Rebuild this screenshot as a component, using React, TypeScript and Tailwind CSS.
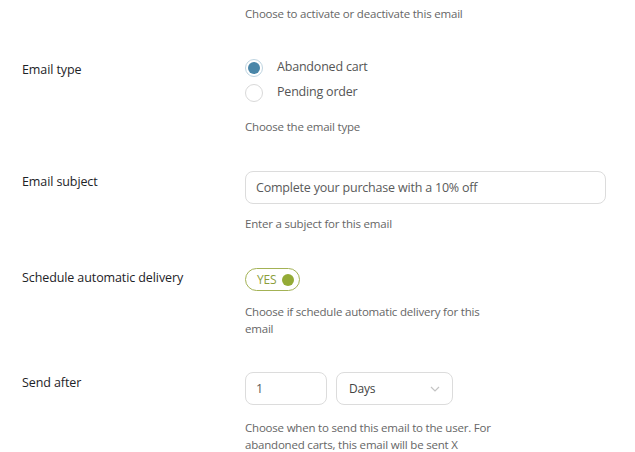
import { useState } from "react";

const font = { fontFamily: '"Open Sans", "Noto Sans", sans-serif' };

function Label({ children, className = "" }: { children: React.ReactNode; className?: string }) {
  return (
    <div
      className={`w-[245px] shrink-0 pl-[22px] text-[12.5px] leading-[18px] font-medium tracking-[-0.1px] text-[#1d2327] ${className}`}
    >
      {children}
    </div>
  );
}

function Desc({ children, className = "" }: { children: React.ReactNode; className?: string }) {
  return <p className={`text-[11.5px] tracking-[-0.2px] text-[#666] ${className}`}>{children}</p>;
}

function Radio({ checked, label, onClick }: { checked: boolean; label: string; onClick: () => void }) {
  return (
    <button type="button" onClick={onClick} className="flex h-[25px] items-center gap-[14px] text-left">
      <span
        className={`flex h-[18px] w-[18px] items-center justify-center rounded-full border bg-white ${
          checked ? "border-[#bfd5e1]" : "border-[#d9d9d9]"
        }`}
      >
        {checked && <span className="h-[12px] w-[12px] rounded-full bg-[#4a86a8]" />}
      </span>
      <span className="text-[12.5px] tracking-[-0.2px] text-[#555]">{label}</span>
    </button>
  );
}

export default function App() {
  const [type, setType] = useState("abandoned");
  const [on, setOn] = useState(true);

  return (
    <div className="min-h-screen w-full bg-white pt-[5px]" style={font}>
      {/* Active */}
      <div className="flex">
        <Label> </Label>
        <Desc className="leading-[18px]">Choose to activate or deactivate this email</Desc>
      </div>

      {/* Email type */}
      <div className="mt-[32px] flex">
        <Label className="pt-[6px]">Email type</Label>
        <div className="flex flex-col">
          <Radio checked={type === "abandoned"} label="Abandoned cart" onClick={() => setType("abandoned")} />
          <Radio checked={type === "pending"} label="Pending order" onClick={() => setType("pending")} />
          <Desc className="mt-[13px] leading-[18px]">Choose the email type</Desc>
        </div>
      </div>

      {/* Email subject */}
      <div className="mt-[35px] flex">
        <Label className="pt-[2px]">Email subject</Label>
        <div className="flex flex-col">
          <input
            defaultValue="Complete your purchase with a 10% off"
            className="h-[33px] w-[361px] rounded-[8px] border border-[#dcdcdc] px-[10px] text-[12.5px] tracking-[-0.2px] text-[#5a5a5a] outline-none"
          />
          <Desc className="mt-[11px] leading-[18px]">Enter a subject for this email</Desc>
        </div>
      </div>

      {/* Schedule */}
      <div className="mt-[35px] flex">
        <Label className="pt-[1px]">Schedule automatic delivery</Label>
        <div className="flex flex-col">
          <button
            type="button"
            onClick={() => setOn(!on)}
            className="flex h-[23px] w-[55px] items-center justify-between rounded-full border border-[#a3b255] pl-[11px] pr-[5px]"
          >
            <span className="text-[12px] leading-none tracking-[-0.2px] text-[#8a9d3b]">{on ? "YES" : "NO"}</span>
            <span className="h-[12px] w-[12px] rounded-full bg-[#94ab36]" />
          </button>
          <Desc className="mt-[12px] w-[255px] leading-[17px]">
            Choose if schedule automatic delivery for this email
          </Desc>
        </div>
      </div>

      {/* Send after */}
      <div className="mt-[35px] flex">
        <Label className="pt-[2px]">Send after</Label>
        <div className="flex flex-col">
          <div className="flex gap-[9px]">
            <input
              defaultValue="1"
              className="h-[33px] w-[82px] rounded-[8px] border border-[#dcdcdc] px-[10px] text-[12.5px] text-[#5a5a5a] outline-none"
            />
            <div className="flex h-[33px] w-[117px] items-center justify-between rounded-[8px] border border-[#dcdcdc] pl-[12px] pr-[12px]">
              <span className="text-[12px] tracking-[-0.2px] text-[#444]">Days</span>
              <svg width="10" height="6" viewBox="0 0 10 6" fill="none">
                <path d="M1 1l4 4 4-4" stroke="#c4c4c4" strokeWidth="1.2" />
              </svg>
            </div>
          </div>
          <Desc className="mt-[14px] w-[255px] leading-[17px]">
            Choose when to send this email to the user. For abandoned carts, this email will be sent X
          </Desc>
        </div>
      </div>
    </div>
  );
}
